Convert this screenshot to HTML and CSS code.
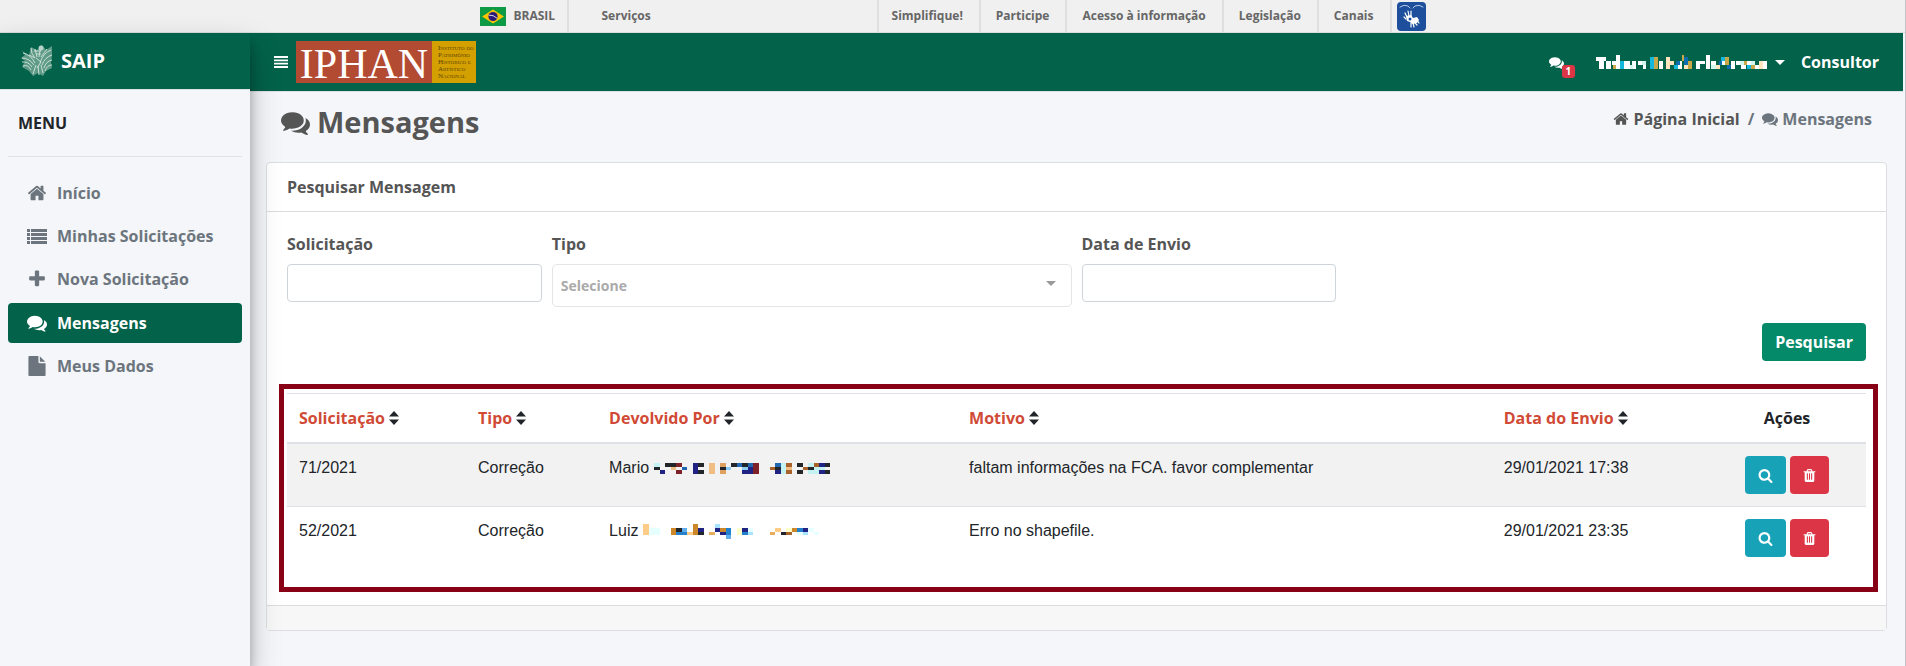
FILE: index.html
```html
<!DOCTYPE html>
<html lang="pt-BR">
<head>
<meta charset="utf-8">
<meta name="viewport" content="width=device-width, initial-scale=1">
<title>SAIP</title>
<link rel="stylesheet" href="styles.css">
</head>
<body>
<svg class="sprite" aria-hidden="true">
  <symbol id="i-comments" viewBox="0 0 1792 1792"><path d="M1408 768q0 139-94 257t-256.500 186.500-353.500 68.500q-86 0-176-16-124 88-278 128-36 9-86 16h-3q-11 0-20.500-8t-11.500-21q-1-3-1-6.500t.5-6.500 2-6l2.500-5 3.500-5.500 4-5 4.500-5 4-4.500q5-6 23-25t26-29.500 22.500-29 25-38.500 20.500-44q-124-72-195-177t-71-224q0-139 94-257t256.500-186.500 353.500-68.500 353.500 68.500 256.500 186.500 94 257zm384 256q0 120-71 224.500t-195 176.500q10 24 20.500 44t25 38.500 22.500 29 26 29.500 23 25q1 1 4 4.500t4.500 5 4 5 3.500 5.500l2.500 5 2 6 .5 6.500-1 6.500q-3 14-13 22t-22 7q-50-7-86-16-154-40-278-128-90 16-176 16-271 0-472-132 58 4 88 4 161 0 309-45t264-129q125-92 192-212t67-254q0-77-23-152 129 71 204 178t75 230z"/></symbol>
  <symbol id="i-home" viewBox="0 0 1792 1792"><path d="M1472 992v480q0 26-19 45t-45 19h-384v-384h-256v384h-384q-26 0-45-19t-19-45v-480q0-1 .5-3t.5-3l575-474 575 474q1 2 1 6zm223-69l-62 74q-8 9-21 11h-3q-13 0-21-7l-692-577-692 577q-12 8-24 7-13-2-21-11l-62-74q-8-10-7-23.500t11-21.500l719-599q32-26 76-26t76 26l244 204v-195q0-14 9-23t23-9h192q14 0 23 9t9 23v408l219 182q10 8 11 21.500t-7 23.500z"/></symbol>
  <symbol id="i-list" viewBox="0 0 20 20"><path d="M0 3h3v3H0zM4 3h16v3H4zM0 7h3v3H0zM4 7h16v3H4zM0 11h3v3H0zM4 11h16v3H4zM0 15h3v3H0zM4 15h16v3H4z"/></symbol>
  <symbol id="i-plus" viewBox="0 0 1792 1792"><path d="M1600 736v192q0 40-28 68t-68 28h-416v416q0 40-28 68t-68 28h-192q-40 0-68-28t-28-68v-416h-416q-40 0-68-28t-28-68v-192q0-40 28-68t68-28h416v-416q0-40 28-68t68-28h192q40 0 68 28t28 68v416h416q40 0 68 28t28 68z"/></symbol>
  <symbol id="i-file" viewBox="0 0 1792 1792"><path d="M1152 512v-472q22 14 36 28l408 408q14 14 28 36h-472zm-128 32q0 40 28 68t68 28h544v1056q0 40-28 68t-68 28h-1344q-40 0-68-28t-28-68v-1600q0-40 28-68t68-28h800v544z"/></symbol>
  <symbol id="i-search" viewBox="0 0 1792 1792"><path d="M1216 832q0-185-131.500-316.500t-316.500-131.500-316.500 131.500-131.500 316.500 131.500 316.500 316.500 131.500 316.500-131.500 131.500-316.500zm512 832q0 52-38 90t-90 38q-54 0-90-38l-343-342q-179 124-399 124-143 0-273.500-55.500t-225-150-150-225-55.500-273.500 55.500-273.500 150-225 225-150 273.500-55.500 273.500 55.500 225 150 150 225 55.500 273.500q0 220-124 399l343 343q37 37 37 90z"/></symbol>
  <symbol id="i-trash" viewBox="0 0 1792 1792"><path d="M704 1376v-704q0-14-9-23t-23-9h-64q-14 0-23 9t-9 23v704q0 14 9 23t23 9h64q14 0 23-9t9-23zm256 0v-704q0-14-9-23t-23-9h-64q-14 0-23 9t-9 23v704q0 14 9 23t23 9h64q14 0 23-9t9-23zm256 0v-704q0-14-9-23t-23-9h-64q-14 0-23 9t-9 23v704q0 14 9 23t23 9h64q14 0 23-9t9-23zm-544-992h448l-48-117q-7-9-17-11h-317q-10 2-17 11zm928 32v64q0 14-9 23t-23 9h-96v948q0 83-47 143.500t-113 60.500h-832q-66 0-113-58.500t-47-141.500v-952h-96q-14 0-23-9t-9-23v-64q0-14 9-23t23-9h309l70-167q15-37 54-63t79-26h320q40 0 79 26t54 63l70 167h309q14 0 23 9t9 23z"/></symbol>
  <symbol id="i-sort" viewBox="0 0 10 14"><path d="M5 0l5 5.500H0zM5 14l5-5.500H0z"/></symbol>
</svg>

<nav class="gov" aria-label="Barra do governo">
  <div class="gov-inner">
    <a class="gov-brand" href="#">
      <svg class="flag" viewBox="0 0 26 19" aria-hidden="true"><path fill="#0c9a45" d="M0 0h26v19H0z"/><path fill="#f8c300" d="M13 2.500l11 7-11 7-11-7z"/><circle cx="13" cy="9.500" r="4.600" fill="#2b1a78"/><path d="M8.800 8.200q4.500-.6 8.200 3" fill="none" stroke="#fff" stroke-width=".8"/></svg>
      BRASIL</a>
    <a class="gov-services" href="#">Serviços</a>
    <div class="gov-links">
      <a class="gov-first" href="#">Simplifique!</a>
      <a href="#">Participe</a>
      <a href="#">Acesso à informação</a>
      <a href="#">Legislação</a>
      <a href="#">Canais</a>
      <a class="gov-libras" href="#" aria-label="Libras">
        <svg viewBox="0 0 29 29" aria-hidden="true"><rect width="29" height="29" rx="4" fill="#1d4f9c"/><g fill="none" stroke="#fff" stroke-linecap="round"><path d="M3 5q4-3 8-1l2 2M26 5q-4-3-8-1l-2 2" stroke="#b8cbe8"/><path d="M10 15l-2-4M12 14l-1-5M14 14v-5M9 17l-2-2" stroke-width="1.200"/><path d="M17 20l3 3M16 21l1 4M14 21v4M20 18l2 3" stroke-width="1.200"/></g><path fill="#fff" d="M9 14l5-1 2 3 4-1 2 3-2 3-5 1-2-2-3-1z"/><circle cx="13" cy="17" r="1.500" fill="#1d4f9c"/></svg>
      </a>
    </div>
  </div>
</nav>

<div class="app">
  <aside class="sidebar">
    <a class="brand" href="#">
      <svg class="brand-logo" viewBox="0 0 32 32" aria-hidden="true"><path fill="#5f9a87" d="M1 6l7 4 2-8 6 3 5-5 4 5 6-4v9l-1 8 1 5-6 3-3 5-5-3-5 3-4-5-7-4 3-6-4-3 4-3z"/><g fill="none" stroke="#d5e6df" stroke-width=".9"><path d="M2 8q8 2 12 10M1 13q7 0 12 7M1 17q6-1 10 5M2 21q5-2 8 4M30 5q-8 3-11 13M31 10q-7 2-10 10M31 15q-6 1-8 8M31 20q-5 0-7 6M10 3q0 6 4 10M14 4l2 8M21 2q-3 5-3 10M26 4l-6 8M12 29l3-9M18 30l-1-9M22 28l-2-8M8 10l6 3M13 6h7M15 9h5M15 13l5 4-4 6"/></g><circle cx="20" cy="3" r="2.500" fill="#b9d4ca"/></svg>
      <span>SAIP</span>
    </a>
    <div class="menu-title">MENU</div>
    <nav class="menu">
      <a href="#"><svg class="ic"><use href="#i-home"/></svg>Início</a>
      <a href="#"><svg class="ic"><use href="#i-list"/></svg>Minhas Solicitações</a>
      <a href="#"><svg class="ic"><use href="#i-plus"/></svg>Nova Solicitação</a>
      <a class="active" href="#" aria-current="page"><svg class="ic"><use href="#i-comments"/></svg>Mensagens</a>
      <a href="#"><svg class="ic"><use href="#i-file"/></svg>Meus Dados</a>
    </nav>
  </aside>

  <div class="main">
    <header class="topbar">
      <button class="burger" type="button" aria-label="Alternar menu"><svg viewBox="0 0 14 12" aria-hidden="true"><path d="M0 0h14v2H0zM0 3.500h14v1.700H0zM0 6.800h14v1.700H0zM0 10h14v2H0z"/></svg></button>
      <a class="iphan" href="#">
        <span class="iphan-name">IPHAN</span>
        <span class="iphan-full"><span>Instituto do</span><span>Patrimônio</span><span>Histórico e</span><span>Artístico</span><span>Nacional</span></span>
      </a>
      <div class="top-right">
        <a class="notif" href="#" aria-label="Mensagens"><svg><use href="#i-comments"/></svg><span class="badge">1</span></a>
        <button class="user" type="button" aria-label="Usuário">
          <svg class="user-name" viewBox="0 0 172 14" shape-rendering="crispEdges" aria-hidden="true">
            <path fill="#fff" d="M0 2h10v4H0zM3 6h5v8H3zM10 6h5v8h-5zM16 6h4v4h-4zM20 0h4v14h-4zM28 6h6v8h-6zM36 6h4v8h-4zM42 6h4v4h-4zM47 10h3v4h-3zM63 6h4v8h-4zM82 6h4v8h-4zM101 6h4v8h-4zM105 6h5v3h-5zM111 0h4v14h-4zM116 6h5v4h-5zM126 6h4v4h-4zM136 6h4v8h-4zM141 6h4v4h-4zM146 10h5v4h-5zM152 6h4v4h-4zM160 10h4v4h-4zM168 6h4v8h-4z"/>
            <path fill="#14b8dc" d="M24 6h4v8h-4zM54 2h4v12h-4zM78 10h4v4h-4zM126 2h4v4h-4zM152 10h4v4h-4z"/>
            <path fill="#c9a84a" d="M17 10h3v4h-3zM58 2h4v12h-4zM86 0h3v6h-3zM93 6h4v8h-4zM130 2h4v8h-4zM149 6h3v4h-3zM156 10h4v4h-4z"/>
            <path fill="#ffe4bf" d="M70 2h4v12h-4zM74 6h4v4h-4zM89 10h4v4h-4zM121 10h4v4h-4zM164 6h4v8h-4z"/>
            <path fill="#0f6cae" d="M80 6h4v4h-4zM89 2h4v8h-4zM124 6h3v4h-3zM132 10h4v4h-4z"/>
            <path fill="#d2f5ee" d="M34 10h3v4h-3zM46 6h4v4h-4zM116 10h5v4h-5zM145 6h4v4h-4zM156 6h4v4h-4z"/>
          </svg>
          <svg class="caret" viewBox="0 0 10 5" aria-hidden="true"><path d="M0 0h10L5 5z"/></svg>
        </button>
        <a class="role" href="#">Consultor</a>
      </div>
    </header>

    <div class="page-head">
      <h1><svg><use href="#i-comments"/></svg>Mensagens</h1>
      <nav class="crumbs" aria-label="Navegação">
        <a href="#"><svg><use href="#i-home"/></svg>Página Inicial</a>
        <span>/</span>
        <span class="crumb-now"><svg><use href="#i-comments"/></svg>Mensagens</span>
      </nav>
    </div>

    <section class="card">
      <h2 class="card-head">Pesquisar Mensagem</h2>
      <div class="card-body">
        <form>
          <div class="fields">
            <div class="field"><label for="sol">Solicitação</label><input id="sol" type="text"></div>
            <div class="field wide"><label for="tipo">Tipo</label>
              <div class="select"><select id="tipo"><option>Selecione</option></select><svg viewBox="0 0 10 5" aria-hidden="true"><path d="M0 0h10L5 5z"/></svg></div></div>
            <div class="field"><label for="data">Data de Envio</label><input id="data" type="text"></div>
          </div>
          <div class="submit"><button class="btn search" type="submit">Pesquisar</button></div>
        </form>
        <div class="results">
          <table>
            <colgroup><col class="c-sol"><col class="c-tipo"><col class="c-dev"><col class="c-mot"><col class="c-data"><col class="c-ac"></colgroup>
            <thead><tr>
              <th><a href="#">Solicitação</a><svg><use href="#i-sort"/></svg></th>
              <th><a href="#">Tipo</a><svg><use href="#i-sort"/></svg></th>
              <th><a href="#">Devolvido Por</a><svg><use href="#i-sort"/></svg></th>
              <th><a href="#">Motivo</a><svg><use href="#i-sort"/></svg></th>
              <th><a href="#">Data do Envio</a><svg><use href="#i-sort"/></svg></th>
              <th class="center">Ações</th>
            </tr></thead>
            <tbody>
              <tr>
                <td>71/2021</td><td>Correção</td>
                <td><span class="person">Mario
                  <svg class="mask mask-a" viewBox="0 0 32 3" preserveAspectRatio="none" shape-rendering="crispEdges" aria-hidden="true">
                    <path stroke="#c4f1f1" d="M0 .5h1M23 .5h1M28 .5h1M23 1.500h1M29 1.500h2M23 2.500h1M28 2.500h2"/>
                    <path stroke="#22252a" d="M2 .5h2M8 .5h1M14 .5h1M16 .5h1M26 .5h1M31 .5h1M0 1.500h1M12 1.500h1M22 1.500h1M28 1.500h1M8 2.500h1M26 2.500h1M31 2.500h1"/>
                    <path stroke="#7d2229" d="M4 .5h1M18 .5h1M18 1.500h1M4 2.500h1M18 2.500h1"/>
                    <path stroke="#202284" d="M7 .5h1M30 .5h1M7 1.500h1M17 1.500h1M1 2.500h1M7 2.500h1M16 2.500h2M22 2.500h1M30 2.500h1"/>
                    <path stroke="#f0be84" d="M10 .5h1M3 1.500h1M10 1.500h1M24 1.500h1M10 2.500h1"/>
                    <path stroke="#e0a060" d="M12 .5h1M12 2.500h1"/>
                    <path stroke="#2066b0" d="M15 .5h1M17 .5h1M22 .5h1M5 1.500h1"/>
                    <path stroke="#8cccf4" d="M13 1.500h1M16 1.500h1"/>
                    <path stroke="#a8622a" d="M24 .5h1M29 .5h1M21 1.500h1M27 1.500h1M24 2.500h1"/>
                  </svg></span></td>
                <td>faltam informações na FCA. favor complementar</td><td>29/01/2021 17:38</td>
                <td class="center"><div class="actions"><button class="btn view" type="button" aria-label="Visualizar"><svg><use href="#i-search"/></svg></button><button class="btn del" type="button" aria-label="Excluir"><svg><use href="#i-trash"/></svg></button></div></td>
              </tr>
              <tr>
                <td>52/2021</td><td>Correção</td>
                <td><span class="person">Luiz
                  <svg class="mask mask-b" viewBox="0 0 32 4" preserveAspectRatio="none" shape-rendering="crispEdges" aria-hidden="true">
                    <path stroke="#ffcc88" d="M0 .5h1M0 1.500h1M24 1.500h1M0 2.500h1M8 2.500h1"/>
                    <path stroke="#cc8828" d="M9 .5h1M5 1.500h1M9 1.500h1M14 1.500h1M27 1.500h1M5 2.500h1M9 2.500h1"/>
                    <path stroke="#a8e4ff" d="M13 .5h1M19 2.500h1M29 2.500h1"/>
                    <path stroke="#e6ffff" d="M1 1.500h2M19 1.500h1M30 1.500h1M1 2.500h2M28 2.500h1M31 2.500h1"/>
                    <path stroke="#22252a" d="M6 1.500h1M10 2.500h1M25 2.500h1"/>
                    <path stroke="#202284" d="M10 1.500h1M13 1.500h1M18 1.500h1M29 1.500h1M14 2.500h1"/>
                    <path stroke="#60acec" d="M7 1.500h1M15 3.500h1"/>
                    <path stroke="#2280cc" d="M15 1.500h1M28 1.500h1M6 2.500h2M15 2.500h1M18 2.500h1"/>
                    <path stroke="#ffffcc" d="M17 1.500h1M26 1.500h1M17 2.500h1"/>
                    <path stroke="#e8ac60" d="M12 2.500h1M23 2.500h1"/>
                    <path stroke="#a86428" d="M26 2.500h1"/>
                  </svg></span></td>
                <td>Erro no shapefile.</td><td>29/01/2021 23:35</td>
                <td class="center"><div class="actions"><button class="btn view" type="button" aria-label="Visualizar"><svg><use href="#i-search"/></svg></button><button class="btn del" type="button" aria-label="Excluir"><svg><use href="#i-trash"/></svg></button></div></td>
              </tr>
            </tbody>
          </table>
        </div>
      </div>
      <footer class="card-foot"></footer>
    </section>
  </div>
</div>
</body>
</html>
```

FILE: styles.css
```css
* { box-sizing: border-box; }

body {
  display: flex;
  flex-direction: column;
  min-height: 100vh;
  margin: 0;
  border-right: 1px solid #c4c4c6;
  background: #f4f6f9;
  color: #212529;
  font: 700 16px/24px "Open Sans", sans-serif;
}

a { color: inherit; text-decoration: none; }
button, input, select { font: inherit; }
svg { fill: currentColor; }
.sprite { display: none; }

/* Government bar */
.gov {
  height: 33px;
  border-bottom: 1px solid #dcdcdc;
  background: #f0f0f0;
  color: #666;
  font-size: 12px;
}
.gov-inner {
  display: flex;
  width: 946px;
  height: 32px;
  margin: 0 auto;
  line-height: 32px;
}
.gov-brand {
  display: flex;
  align-items: center;
  gap: 8px;
  width: 89px;
  border-right: 2px solid #dfdfdf;
}
.flag { width: 26px; height: 19px; }
.gov-services { flex: 1; padding-left: 33px; }
.gov-links { display: flex; }
.gov-links a { padding: 0 16px 0 15px; border-right: 2px solid #dfdfdf; }
.gov-links .gov-first { padding-left: 13px; border-left: 2px solid #dfdfdf; }
.gov-links .gov-libras { padding: 2px 0 0 5px; border: 0; }
.gov-libras svg { display: block; width: 29px; height: 29px; }

/* Shell */
.app { display: flex; flex: 1; padding-right: 2px; }

.sidebar {
  position: relative;
  z-index: 1;
  flex: 0 0 250px;
  background: #f4f6f9;
  box-shadow: 0 14px 28px rgba(0, 0, 0, .25), 0 10px 10px rgba(0, 0, 0, .22);
}
.brand {
  display: flex;
  align-items: center;
  gap: 8px;
  height: 57px;
  padding-left: 21px;
  border-bottom: 1px solid #dee2e6;
  background: #03624a;
  color: #fff;
  font-size: 20px;
}
.brand-logo { width: 32px; height: 32px; }
.menu-title {
  margin: 0 8px;
  padding: 21px 10px;
  border-bottom: 1px solid #dee2e6;
}
.menu {
  display: flex;
  flex-direction: column;
  gap: 3px;
  padding: 16px 8px;
  color: #6c757d;
}
.menu a {
  display: flex;
  align-items: center;
  gap: 10px;
  height: 40px;
  padding-left: 19px;
  border-radius: 4px;
}
.menu .active { margin-top: 1px; background: #03624a; color: #fff; }
.ic { width: 20px; height: 20px; }

.main { flex: 1; min-width: 0; }

.topbar {
  display: flex;
  align-items: center;
  height: 59px;
  padding: 0 24px;
  border-bottom: 1px solid #dee2e6;
  background: #03624a;
  color: #fff;
}
.burger { display: flex; padding: 0; border: 0; background: none; color: inherit; }
.burger svg { width: 14px; height: 12px; }
.iphan { display: flex; height: 42px; margin-left: 8px; font-family: "Liberation Serif", serif; font-weight: 400; }
.iphan-name { width: 136px; background: #b34a32; font-size: 42px; line-height: 46px; text-align: center; }
.iphan-full {
  display: flex;
  flex-direction: column;
  width: 44px;
  padding: 4px 0 0 6px;
  background: #d4a000;
  color: #5c4308;
  font-size: 7px;
  font-variant: small-caps;
  line-height: 7px;
  white-space: nowrap;
}

.top-right { display: flex; align-items: center; margin-left: auto; }
.notif { position: relative; margin-right: 32px; }
.notif svg { display: block; width: 15px; height: 15px; }
.badge {
  position: absolute;
  top: 10px;
  left: 13px;
  width: 13px;
  border-radius: 3px;
  background: #dc3545;
  font-size: 10px;
  line-height: 13px;
  text-align: center;
}
.user { display: flex; align-items: center; gap: 8px; padding: 0; border: 0; background: none; color: inherit; }
.user-name { width: 171px; height: 14px; }
.caret { width: 10px; height: 5px; }
.role { margin-left: 16px; }

.page-head {
  display: flex;
  justify-content: space-between;
  height: 70px;
  padding: 10px 31px 0;
  color: #555;
}
.page-head h1 {
  display: flex;
  align-items: center;
  gap: 7px;
  height: 40px;
  margin: 0;
  font-size: 29px;
  line-height: 40px;
}
.page-head h1 svg { width: 29px; height: 29px; }
.crumbs { display: flex; gap: 8px; padding-top: 5px; color: #6c757d; }
.crumbs a { color: #555; }
.crumbs svg { width: 16px; height: 16px; margin-right: 4px; vertical-align: -2px; }

/* Card */
.card {
  margin: 0 16px;
  border: 1px solid #dcdee0;
  border-radius: 4px;
  background: #fff;
  color: #555;
}
.card-head { margin: 0; padding: 12px 20px; border-bottom: 1px solid #dcdcdc; font-size: 16px; }
.card-body { padding: 20px 20px 13px; }
.card-foot { height: 25px; border-top: 1px solid #dcdcdc; background: #f7f7f7; }

.fields { display: grid; grid-template-columns: repeat(12, 1fr); align-items: start; gap: 10px; }
.field { display: flex; flex-direction: column; grid-column: span 2; gap: 8px; }
.field.wide { grid-column: span 4; }
.field input {
  width: 100%;
  height: 38px;
  padding: 0 12px;
  border: 1px solid #ced4da;
  border-radius: 4px;
}
.select { position: relative; }
.select select {
  display: block;
  width: 100%;
  height: 43px;
  padding: 0 8px;
  border: 1px solid #e4e6e6;
  border-radius: 5px;
  appearance: none;
  background: #fff;
  color: #aaa;
  font-size: 14px;
}
.select svg { position: absolute; top: 17px; right: 16px; width: 10px; height: 5px; color: #999; pointer-events: none; }

.submit { display: flex; justify-content: flex-end; margin: 16px 0 23px; }
.btn { height: 38px; border: 0; border-radius: 4px; color: #fff; }
.search { padding: 0 13px; background: #058a69; }

/* Results */
.results {
  margin: 0 -12px 0 -8px;
  padding: 4px 7px 18px 3px;
  border: 5px solid #880015;
}
table { width: 100%; border-collapse: collapse; table-layout: fixed; color: #212529; }
.c-sol { width: 11.340%; }
.c-tipo { width: 8.300%; }
.c-dev { width: 22.800%; }
.c-mot { width: 33.860%; }
.c-data { width: 13.700%; }
.c-ac { width: 10%; }
th {
  padding: 12px;
  border-top: 1px solid #dee2e6;
  border-bottom: 2px solid #dee2e6;
  text-align: left;
}
th a { color: #d04a35; }
th svg { width: 10px; height: 14px; margin-left: 4px; vertical-align: -1px; }
td {
  padding: 12px;
  border-top: 1px solid #dee2e6;
  font-family: "Liberation Sans", Arial, sans-serif;
  font-weight: 400;
  vertical-align: top;
}
tbody tr:nth-child(odd) { background: #f2f2f2; }
.center { text-align: center; }
.person { display: flex; align-items: center; gap: 5px; }
.mask { width: 176px; fill: none; stroke-width: 1; }
.mask-a { height: 11px; }
.mask-b { height: 15px; }
.actions { display: flex; justify-content: center; gap: 4px; }
.actions .btn { display: flex; align-items: center; justify-content: center; padding: 0 12px; }
.view { background: #17a2b8; }
.del { background: #dc3545; }
.view svg { width: 17px; height: 15px; }
.del svg { width: 15px; height: 15px; }
```
